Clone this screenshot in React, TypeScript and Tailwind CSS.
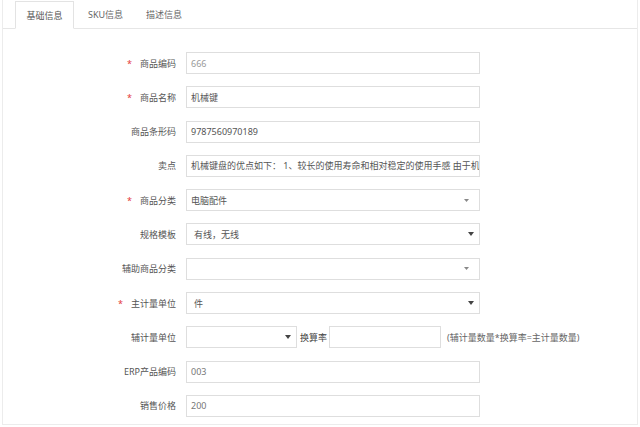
import type { ReactNode } from "react"

const font = { fontFamily: '"Noto Sans", "Noto Sans CJK SC", sans-serif' }

function Arrow({ dark }: { dark?: boolean }) {
    return dark ? (
        <svg width="6" height="4" viewBox="0 0 6 4" className="shrink-0">
            <path d="M0 0h6L3 4z" fill="#444" />
        </svg>
    ) : (
        <svg width="5" height="3" viewBox="0 0 5 3" className="shrink-0">
            <path d="M0 0h5L2.5 3z" fill="#888" />
        </svg>
    )
}

function Row({ label, required, children }: { label: string; required?: boolean; children: ReactNode }) {
    return (
        <div className="flex h-[22px] items-center">
            <div className="w-[173px] shrink-0 text-right text-[#555]">
                {required && <span className="mr-[8px] text-[#e4393c]">*</span>}
                {label}
            </div>
            <div className="ml-[10px] flex h-full items-center">{children}</div>
        </div>
    )
}

function Input({ value, tone = "text-[#555]", width = "w-[294px]" }: { value?: string; tone?: string; width?: string }) {
    return (
        <div
            className={`${width} ${tone} flex h-full items-center overflow-hidden whitespace-nowrap border border-[#dedede] bg-white px-[4px]`}
        >
            {value}
        </div>
    )
}

function Select({ value, native, width = "w-[294px]" }: { value?: string; native?: boolean; width?: string }) {
    return (
        <div
            className={`${width} flex h-full items-center justify-between border border-[#dedede] bg-white text-[#555] ${
                native ? "pl-[7px] pr-[5px]" : "pl-[4px] pr-[10px]"
            }`}
        >
            <span>{value}</span>
            <Arrow dark={native} />
        </div>
    )
}

export default function App() {
    return (
        <div className="h-[427px] w-[640px] bg-white px-[2px] pb-[2px] text-[9px] leading-none" style={font}>
            <div className="flex h-full flex-col border-x border-b border-[#ececec]">
                <div className="flex h-[29px] items-end border-b border-[#e6e6e6] pl-[12px]">
                    <div className="-mb-px flex h-[28px] w-[59px] items-center justify-center border border-[#e3e3e3] border-b-white bg-white text-[#555]">
                        基础信息
                    </div>
                    <div className="flex h-[28px] items-center pl-[14px] text-[#666]">SKU信息</div>
                    <div className="flex h-[28px] items-center pl-[23px] text-[#666]">描述信息</div>
                </div>
                <div className="flex flex-col gap-[12.3px] pt-[23px]">
                    <Row label="商品编码" required>
                        <Input value="666" tone="text-[#999]" />
                    </Row>
                    <Row label="商品名称" required>
                        <Input value="机械键" />
                    </Row>
                    <Row label="商品条形码">
                        <Input value="9787560970189" />
                    </Row>
                    <Row label="卖点">
                        <Input value="机械键盘的优点如下： 1、较长的使用寿命和相对稳定的使用手感  由于机械键盘" />
                    </Row>
                    <Row label="商品分类" required>
                        <Select value="电脑配件" />
                    </Row>
                    <Row label="规格模板">
                        <Select value="有线，无线" native />
                    </Row>
                    <Row label="辅助商品分类">
                        <Select />
                    </Row>
                    <Row label="主计量单位" required>
                        <Select value="件" native />
                    </Row>
                    <Row label="辅计量单位">
                        <Select native width="w-[111px]" />
                        <span className="ml-[3px] mr-[2px] text-[#444]">换算率</span>
                        <Input width="w-[112px]" />
                        <span className="ml-[6px] text-[#666]">(辅计量数量*换算率=主计量数量)</span>
                    </Row>
                    <Row label="ERP产品编码">
                        <Input value="003" tone="text-[#777]" />
                    </Row>
                    <Row label="销售价格">
                        <Input value="200" tone="text-[#777]" />
                    </Row>
                </div>
            </div>
        </div>
    )
}
